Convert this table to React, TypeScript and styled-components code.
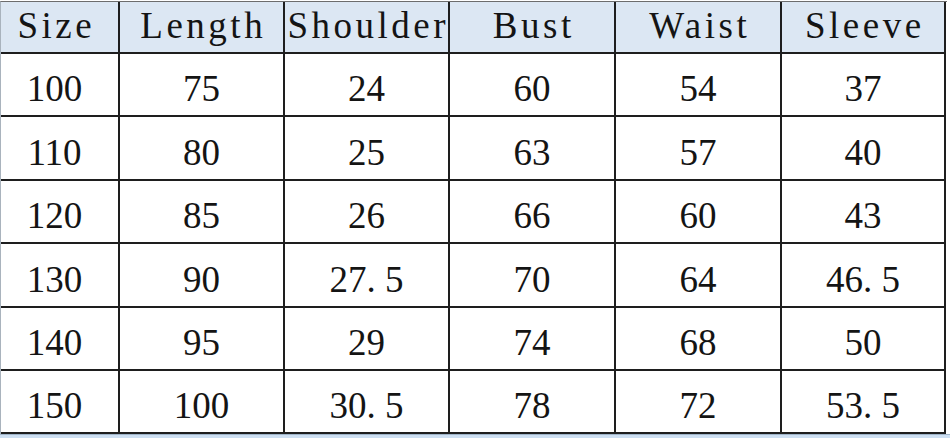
import React from "react";
import styled, { createGlobalStyle } from "styled-components";

const GlobalStyle = createGlobalStyle`
  html, body {
    margin: 0;
    padding: 0;
    background: #ffffff;
  }
  body {
    width: 950px;
    height: 438px;
    overflow: hidden;
  }
`;

const Page = styled.div`
  width: 950px;
  height: 438px;
  display: flex;
  flex-direction: column;
  background: #ffffff;
`;

const Table = styled.div`
  margin-top: 1px;
  width: 947px;
  box-sizing: border-box;
  display: grid;
  grid-template-columns: 119px 165px 165px 166px 166px 164px;
  grid-template-rows: 52px 63px 64px 63px 64px 63px 63px;
  border-top: 1px solid #6d6d6d;
  border-left: 1px solid #a9b3bd;
  font-family: "Liberation Serif", "Times New Roman", serif;
  font-size: 37px;
  color: #141414;
`;

const Cell = styled.div<{ $head?: boolean; $first?: boolean }>`
  box-sizing: border-box;
  display: flex;
  align-items: center;
  justify-content: center;
  border-right: 2px solid #1e1e1e;
  border-bottom: 2px solid #1e1e1e;
  background: ${(p) => (p.$head ? "#dce7f3" : "#ffffff")};
  padding-top: ${(p) => (p.$head ? "0" : "8px")};
  padding-bottom: ${(p) => (p.$head ? "3px" : "0")};
  padding-right: ${(p) => (p.$first ? "10px" : "0")};
  padding-left: ${(p) => (p.$head ? "3.5px" : "0")};
  letter-spacing: ${(p) => (p.$head ? "3.5px" : "0")};
  line-height: normal;
  white-space: nowrap;
`;

const Dot = styled.span`
  display: inline-block;
  width: 0.5em;
  text-align: left;
`;

const Strip = styled.div`
  flex: 1;
  background: #cddff2;
  border-top: 1px solid #9fb4c8;
`;

const headers = ["Size", "Length", "Shoulder", "Bust", "Waist", "Sleeve"];

const rows: string[][] = [
  ["100", "75", "24", "60", "54", "37"],
  ["110", "80", "25", "63", "57", "40"],
  ["120", "85", "26", "66", "60", "43"],
  ["130", "90", "27.5", "70", "64", "46.5"],
  ["140", "95", "29", "74", "68", "50"],
  ["150", "100", "30.5", "78", "72", "53.5"],
];

function renderValue(v: string) {
  const parts = v.split(".");
  if (parts.length === 1) return v;
  return (
    <>
      {parts[0]}
      <Dot>.</Dot>
      {parts[1]}
    </>
  );
}

export default function App() {
  return (
    <>
      <GlobalStyle />
      <Page>
        <Table>
          {headers.map((h, i) => (
            <Cell key={h} $head $first={i === 0}>
              {h}
            </Cell>
          ))}
          {rows.map((r, ri) =>
            r.map((v, ci) => (
              <Cell key={`${ri}-${ci}`} $first={ci === 0}>
                {renderValue(v)}
              </Cell>
            ))
          )}
        </Table>
        <Strip />
      </Page>
    </>
  );
}
